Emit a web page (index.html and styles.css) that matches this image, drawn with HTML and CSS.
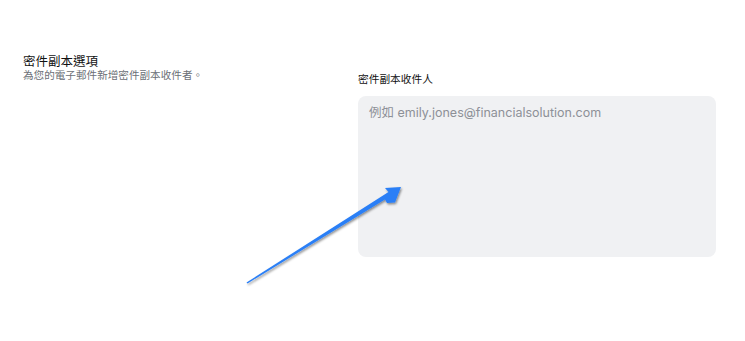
FILE: index.html
```html
<!DOCTYPE html>
<html lang="zh-Hant">

<head>
    <meta charset="UTF-8">
    <title>密件副本選項</title>
    <link rel="stylesheet" href="styles.css">
</head>

<body>
    <main class="settings-row">
        <div class="section-info">
            <h2 class="section-title">密件副本選項</h2>
            <p class="section-desc">為您的電子郵件新增密件副本收件者。</p>
        </div>
        <div class="field">
            <label for="bcc-input" class="field-label">密件副本收件人</label>
            <textarea id="bcc-input" class="field-input" placeholder="例如 emily.jones@financialsolution.com"></textarea>
        </div>
    </main>

    <!-- annotation arrow -->
    <svg class="arrow" width="745" height="341" viewBox="0 0 745 341">
        <defs>
            <filter id="shadow" x="-10%" y="-10%" width="130%" height="130%">
                <feDropShadow dx="1" dy="1.5" stdDeviation="1.2" flood-color="#000" flood-opacity="0.45" />
            </filter>
        </defs>
        <polygon filter="url(#shadow)" fill="#2a7ff6"
            points="247.5,283.5 385,199.5 387,203 395,202.5 401,187 385,188 388.5,192 246.5,282.5" />
    </svg>
</body>

</html>
```

FILE: styles.css
```css
* {
    margin: 0;
    padding: 0;
    box-sizing: border-box;
}

body {
    background-color: #ffffff;
    font-family: Inter, "Noto Sans CJK TC", sans-serif;
    color: #111111;
}

.settings-row {
    display: flex;
    padding: 54px 29px 0 23px;
}

.section-info {
    width: 335px;
}

.section-title {
    font-size: 12.5px;
    font-weight: 400;
    line-height: 15px;
    color: #111111;
}

.section-desc {
    font-size: 10.6px;
    line-height: 13px;
    color: #6b6f76;
}

.field {
    flex: 1;
    display: flex;
    flex-direction: column;
    padding-top: 19px;
}

.field-label {
    font-size: 10.7px;
    line-height: 14px;
    color: #111111;
    margin-bottom: 9px;
}

.field-input {
    width: 358px;
    height: 161px;
    padding: 8px 11px;
    border: none;
    border-radius: 8px;
    background-color: #f0f1f3;
    font-family: Inter, "Noto Sans CJK TC", sans-serif;
    font-size: 12.5px;
    line-height: 18px;
    resize: none;
    outline: none;
}

.field-input::placeholder {
    color: #8d9097;
}

.arrow {
    position: absolute;
    left: 0;
    top: 0;
    pointer-events: none;
}
```
